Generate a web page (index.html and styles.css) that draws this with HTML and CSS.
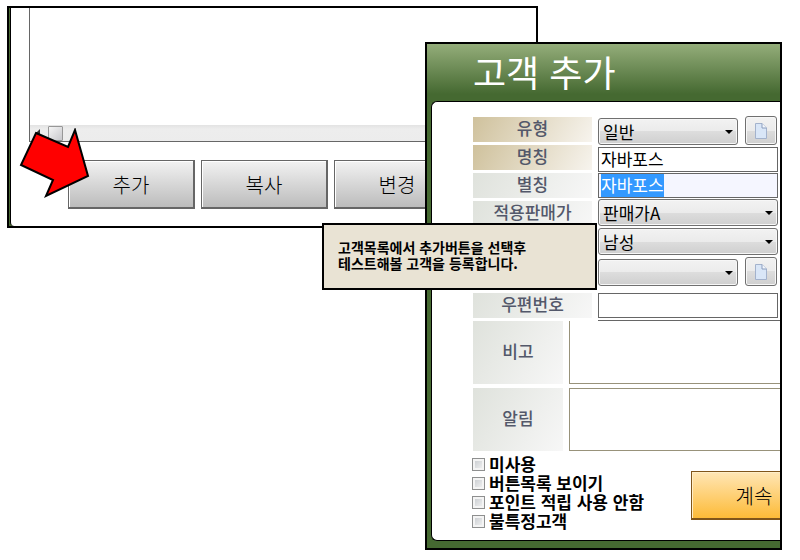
FILE: index.html
```html
<!DOCTYPE html>
<html lang="ko">

<head>
    <meta charset="UTF-8">
    <meta name="viewport" content="width=device-width, initial-scale=1.0">
    <title>고객 추가</title>
    <link rel="stylesheet" href="styles.css">
</head>

<body>
    <div class="stage">
        <!-- 고객목록 창 -->
        <div class="window list-window">
            <div class="list-frame">
                <div class="list-box">
                    <div class="list-rows"></div>
                    <div class="scrollbar">
                        <svg class="scroll-arrow" width="4" height="8" viewBox="0 0 4 8"><path d="M4 0v8L0 4z" fill="#333"/></svg>
                        <div class="thumb"></div>
                    </div>
                </div>
                <div class="list-buttons">
                    <button type="button" class="btn">추가</button>
                    <button type="button" class="btn">복사</button>
                    <button type="button" class="btn">변경</button>
                </div>
            </div>
        </div>

        <!-- 추가 버튼을 가리키는 화살표 -->
        <svg class="arrow" width="72" height="72" viewBox="0 0 72 72">
            <path d="M17 5 49 19 56 2 69 48 27 68 34 52 2 37z" fill="#f00" stroke="#000" stroke-width="2"/>
        </svg>

        <!-- 고객 추가 창 -->
        <form class="window dialog">
            <h1>고객 추가</h1>
            <div class="panel">
                <div class="columns">
                    <div class="labels">
                        <label class="tag required" for="kind">유형</label>
                        <label class="tag required" for="name">명칭</label>
                        <label class="tag" for="alias">별칭</label>
                        <label class="tag" for="price">적용판매가</label>
                    </div>
                    <div class="fields">
                        <div class="pair">
                            <select id="kind"><option>일반</option></select>
                            <button type="button" class="icon-btn" aria-label="유형 추가">
                                <svg width="14" height="18" viewBox="0 0 14 18"><path d="M1.500 1.500h6.500l4.500 4.500v10.500h-11z" fill="#d9e6f7" stroke="#a3b2cc"/><path d="M8 1.500v4.500h4.500" fill="#f4f8fd" stroke="#8a9cbc"/></svg>
                            </button>
                        </div>
                        <input type="text" id="name" value="자바포스">
                        <input type="text" id="alias" class="active" value="자바포스">
                        <select id="price"><option>판매가A</option></select>
                        <select aria-label="성별"><option>남성</option></select>
                        <div class="pair">
                            <select aria-label="분류"><option></option></select>
                            <button type="button" class="icon-btn" aria-label="분류 추가">
                                <svg width="14" height="18" viewBox="0 0 14 18"><path d="M1.500 1.500h6.500l4.500 4.500v10.500h-11z" fill="#d9e6f7" stroke="#a3b2cc"/><path d="M8 1.500v4.500h4.500" fill="#f4f8fd" stroke="#8a9cbc"/></svg>
                            </button>
                        </div>
                    </div>
                </div>
                <div class="zip-row">
                    <label class="tag" for="zip">우편번호</label>
                    <input type="text" id="zip">
                </div>
                <div class="divider"></div>
                <div class="memo-row">
                    <label class="tag" for="note">비고</label>
                    <textarea id="note" class="no-top"></textarea>
                </div>
                <div class="memo-row">
                    <label class="tag" for="alert">알림</label>
                    <textarea id="alert"></textarea>
                </div>
                <div class="bottom">
                    <div class="checks">
                        <label><input type="checkbox"><span>미사용</span></label>
                        <label><input type="checkbox"><span>버튼목록 보이기</span></label>
                        <label><input type="checkbox"><span>포인트 적립 사용 안함</span></label>
                        <label><input type="checkbox"><span>불특정고객</span></label>
                    </div>
                    <button type="button" class="btn continue">계속</button>
                </div>
            </div>
        </form>

        <!-- 설명 -->
        <p class="callout">고객목록에서 추가버튼을 선택후<br>테스트해볼 고객을 등록합니다.</p>
    </div>

    <script>
        const alias = document.getElementById('alias');
        alias.focus();
        alias.select();
    </script>
</body>

</html>
```

FILE: styles.css
```css
* {
    box-sizing: border-box;
}

body {
    margin: 0;
    background-color: #fff;
    color: #000;
    font-family: "Noto Sans CJK KR", sans-serif;
    font-size: 17px;
}

button,
input,
select,
textarea {
    margin: 0;
    font-family: inherit;
    font-size: 17px;
    color: #000;
}

/* 창들은 서로 겹쳐서 놓인다 */
.stage {
    position: relative;
    min-height: 560px;
}

.window {
    position: absolute;
    border: 2px solid #000;
    background-color: #fff;
    overflow: hidden;
}

.list-window {
    left: 7px;
    top: 6px;
    width: 531px;
    background-color: #4a6a33;
    padding-left: 1px;
}

.list-frame {
    border-left: 1px solid #000;
    border-bottom-left-radius: 4px;
    background-color: #fff;
    padding: 0 0 17px 18px;
}

.list-box {
    border-left: 1px solid #666;
    border-bottom: 1px solid #666;
}

.list-rows {
    height: 117px;
}

.scrollbar {
    display: flex;
    align-items: center;
    gap: 8px;
    height: 16px;
    padding-left: 6px;
    background: linear-gradient(#e3e3e3, #ededed 4px, #ececec);
}

.thumb {
    width: 15px;
    height: 15px;
    border: 1px solid #979797;
    border-radius: 1px;
    background: linear-gradient(135deg, #f5f5f5, #c8c8cc);
}

.list-buttons {
    display: flex;
    gap: 6px;
    padding: 18px 0 0 39px;
}

.btn {
    flex: none;
    width: 127px;
    height: 49px;
    padding: 0;
    border: 1px solid #666;
    border-right-width: 2px;
    border-bottom-width: 2px;
    box-shadow: inset 1px 1px 0 #fff;
    background: linear-gradient(#f2f2f2, #bcbcbc);
    font-size: 20px;
    font-weight: 300;
}

.arrow {
    position: absolute;
    left: 19px;
    top: 128px;
}

.dialog {
    left: 425px;
    top: 42px;
    width: 357px;
    padding: 0 0 7px 4px;
    background: linear-gradient(#94ad7a, #456931 50px);
}

.dialog h1 {
    height: 57px;
    margin: 0;
    padding-left: 42px;
    color: #fff;
    font-size: 36px;
    font-weight: 400;
    line-height: 54px;
}

.panel {
    padding: 14px 0 9px 41px;
    border: 1px solid #000;
    border-right: none;
    border-radius: 6px 0 0 6px;
    background-color: #fff;
}

.columns {
    display: flex;
    gap: 6px;
}

.labels {
    display: flex;
    flex-direction: column;
    gap: 3px;
    padding-top: 1px;
}

.tag {
    flex: none;
    width: 119px;
    height: 25px;
    background: linear-gradient(120deg, #dfe2dc, #f7f7f7);
    color: #53586a;
    font-weight: 500;
    line-height: 21px;
    text-align: center;
}

.tag.required {
    background: linear-gradient(120deg, #cfc19c, #f7f4ee);
}

.fields {
    width: 180px;
}

.fields input {
    display: block;
    margin-bottom: 1px;
}

.fields > select,
.pair {
    margin-bottom: 2px;
}

.pair {
    display: flex;
    align-items: flex-end;
    gap: 7px;
}

input[type="text"] {
    width: 180px;
    height: 25px;
    padding: 0 2px 2px;
    border: 1px solid #666;
    border-radius: 0;
    background-color: #fff;
    outline: none;
    line-height: 18px;
}

input.active {
    background-color: #f5f6ff;
}

input::selection {
    background-color: #39f;
    color: #fff;
}

select {
    display: block;
    appearance: none;
    width: 180px;
    height: 27px;
    padding: 0 16px 2px 4px;
    border: 1px solid #707070;
    border-radius: 3px;
    background:
        url("data:image/svg+xml,%3Csvg xmlns='http://www.w3.org/2000/svg' width='8' height='4'%3E%3Cpath d='M0 0h8L4 4z'/%3E%3C/svg%3E") no-repeat right 4px center,
        linear-gradient(#f2f2f2, #ebebeb 50%, #dddddd 50%, #cfcfcf);
    box-shadow: inset 0 0 0 1px #f7f7f7;
}

.pair select {
    width: 140px;
}

.icon-btn {
    display: flex;
    align-items: center;
    justify-content: center;
    width: 32px;
    height: 29px;
    padding: 0;
    border: 1px solid #707070;
    border-radius: 3px;
    background: linear-gradient(#f2f2f2, #ebebeb 50%, #dddddd 50%, #cfcfcf);
    box-shadow: inset 0 0 0 1px #f7f7f7;
}

.zip-row {
    display: flex;
    gap: 6px;
    padding-top: 5px;
}

.divider {
    height: 1px;
    margin: 2px 0 0 125px;
    background-color: #666;
}

.memo-row {
    display: flex;
    gap: 6px;
    margin-bottom: 4px;
}

.memo-row .tag {
    width: 90px;
    height: 63px;
    line-height: 59px;
}

textarea {
    flex: 1;
    height: 63px;
    padding: 2px 4px;
    border: 1px solid #98927a;
    border-right: none;
    resize: none;
    outline: none;
}

textarea.no-top {
    border-top: none;
}

.bottom {
    display: flex;
    justify-content: space-between;
}

.checks label {
    display: flex;
    align-items: center;
    gap: 4px;
    height: 19px;
    font-weight: 700;
    line-height: 17px;
    white-space: nowrap;
}

.checks span {
    padding-bottom: 2px;
}

.checks input {
    appearance: none;
    width: 13px;
    height: 13px;
    margin-left: -1px;
    border: 1px solid #8e8f8f;
    background: linear-gradient(135deg, #c4c8cc, #f6f6f6);
    box-shadow: inset 0 0 0 2px #f4f4f4;
}

.continue {
    margin: 16px -38px 0 0;
    border-color: #80551a;
    box-shadow: inset 1px 1px 0 #ffeec8;
    background: linear-gradient(#ffe6b5, #fdbb38);
}

.callout {
    position: absolute;
    left: 322px;
    top: 223px;
    width: 275px;
    margin: 0;
    padding: 14px 14px 17px;
    border: 2px solid #000;
    background-color: #e9e3d4;
    font-size: 14px;
    font-weight: 700;
    line-height: 16px;
}
```
